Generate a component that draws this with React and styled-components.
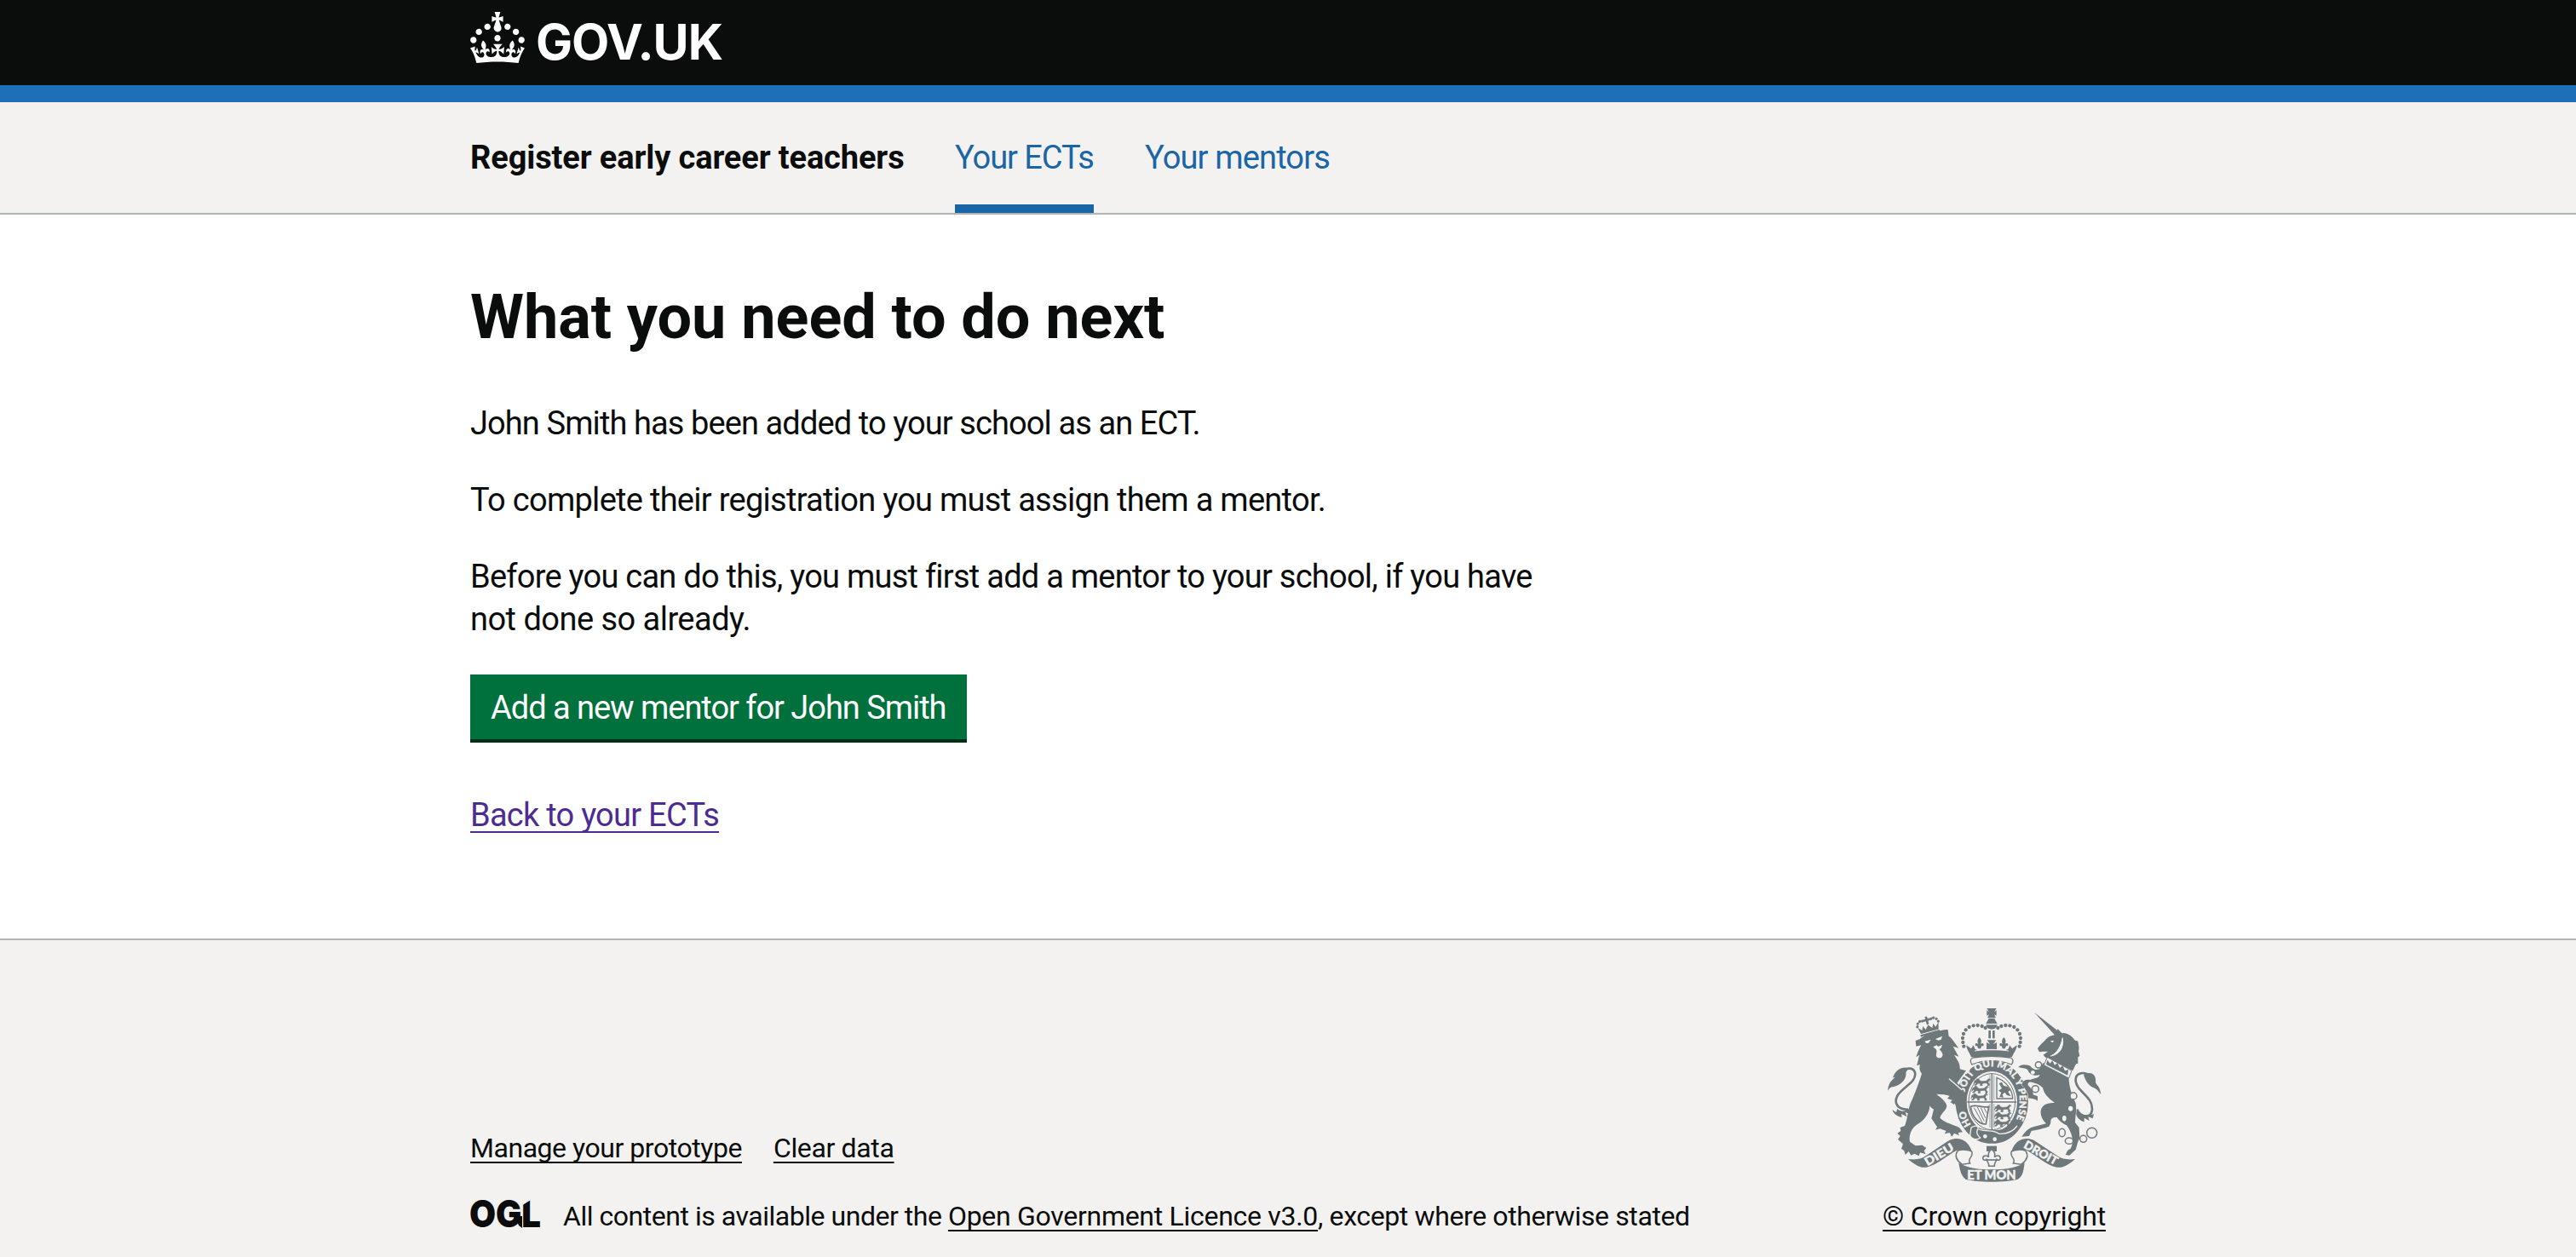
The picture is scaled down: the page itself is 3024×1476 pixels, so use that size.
import React from 'react';
import styled, { createGlobalStyle, css } from 'styled-components';

const INK = '#0b0c0c';
const PAPER = '#f3f2f1';
const BORDER = '#b1b4b6';
const LINK = '#1a65a6';
const CREST = '#6e787b';

const GlobalStyle = createGlobalStyle`
  *, *::before, *::after { box-sizing: border-box; }
  body {
    margin: 0;
    background: #fff;
    color: ${INK};
    font-family: Roboto, "Liberation Sans", sans-serif;
    font-size: 38px;
    line-height: 50px;
  }
`;

const Page = styled.div`
  height: 1476px;
  display: flex;
  flex-direction: column;
  overflow: hidden;
`;

const Container = styled.div`
  width: 1920px;
  margin: 0 auto;
`;

const Header = styled.header`
  background: ${INK};
  border-bottom: 20px solid #1d70b8;
  height: 120px;
`;

const HeaderInner = styled(Container)`
  padding-top: 14px;
  display: flex;
  align-items: flex-start;
`;

const HomeLogo = styled.svg`
  width: 300px;
  height: 80px;
  fill: #fff;
  display: block;
  overflow: visible;
`;

const ServiceBar = styled.div`
  background: ${PAPER};
  border-bottom: 2px solid ${BORDER};
`;

const ServiceInner = styled(Container)`
  height: 130px;
  display: flex;
  gap: 60px;
`;

const ServiceName = styled.span`
  width: 509px;
  line-height: 130px;
  font-weight: 700;
  white-space: nowrap;
  letter-spacing: -0.12px;
`;

const NavLink = styled.a`
  line-height: 130px;
  height: 130px;
  color: ${LINK};
  text-decoration: none;
  white-space: nowrap;
  letter-spacing: ${(p) => p.$track}px;
  ${(p) => p.$active && css`border-bottom: 10px solid ${LINK};`}
`;

const Main = styled(Container).attrs({ as: 'main' })`
  padding: 81px 0 120px;
`;

const Heading = styled.h1`
  margin: 0 0 59px;
  font-size: 72px;
  line-height: 80px;
  font-weight: 700;
  letter-spacing: -0.05px;
`;

const Column = styled.div`
  width: 1280px;
`;

const Paragraph = styled.p`
  margin: 0 0 40px;
  letter-spacing: ${(p) => p.$track}px;
`;

const Tracked = styled.span`
  letter-spacing: ${(p) => p.$track}px;
`;

const Button = styled.button`
  display: block;
  width: 583px;
  height: 76px;
  margin: 0 0 64px;
  padding: 2px 0 0 24px;
  border: 0;
  background: #00703c;
  box-shadow: 0 4px 0 #002d18;
  color: #fff;
  font: inherit;
  text-align: left;
  white-space: nowrap;
  letter-spacing: -1.03px;
`;

const Link = styled.a`
  color: ${(p) => (p.$visited ? '#4c2c92' : INK)};
  text-decoration: underline;
  text-decoration-thickness: 2px;
  text-underline-offset: ${(p) => (p.$visited ? 6 : 5)}px;
  text-decoration-skip-ink: none;
  letter-spacing: ${(p) => p.$track}px;
  white-space: nowrap;
`;

const BackRow = styled.p`
  margin: 0;
`;

const Footer = styled.footer`
  flex: 1;
  background: ${PAPER};
  border-top: 2px solid ${BORDER};
  padding-top: 80px;
  font-size: 32px;
  line-height: 40px;
`;

const FooterInner = styled(Container)`
  display: flex;
  justify-content: space-between;
  align-items: flex-end;
`;

const FooterMeta = styled.div`
  display: flex;
  flex-direction: column;
  gap: 40px;
`;

const FooterLinks = styled.div`
  display: flex;
  gap: 37px;
`;

const Licence = styled.div`
  display: flex;
  gap: 27px;
  white-space: nowrap;
`;

const OglMark = styled.svg`
  width: 82px;
  height: 34px;
  display: block;
  overflow: visible;
`;

const Copyright = styled.div`
  width: 262px;
  display: flex;
  flex-direction: column;
  align-items: center;
  gap: 20px;
`;

const CrestSvg = styled.svg`
  width: 250px;
  height: 204px;
  display: block;
`;

const GovLogo = () => (
  <HomeLogo viewBox="0 0 300 80" aria-label="GOV.UK">
    <path
      transform="scale(2)"
      d="M22.6 10.4c-1 .4-2-.1-2.4-1-.4-.9.1-2 1-2.4.9-.4 2 .1 2.4 1s-.1 2-1 2.4m-5.9 6.7c-.9.4-2-.1-2.4-1-.4-.9.1-2 1-2.4.9-.4 2 .1 2.4 1s-.1 2-1 2.4m10.8-3.7c-1 .4-2-.1-2.4-1-.4-.9.1-2 1-2.4.9-.4 2 .1 2.4 1s0 2-1 2.4m3.3 4.8c-1 .4-2-.1-2.4-1-.4-.9.1-2 1-2.4.9-.4 2 .1 2.4 1s-.1 2-1 2.4M17 4.7l2.3 1.2V2.5l-2.3.7-.2-.2.9-3h-3.4l.9 3-.2.2c-.1.1-2.3-.7-2.3-.7v3.4L15 4.7c.1.1.1.2.2.2l-1.3 4c-.1.2-.1.4-.1.6 0 1.1.8 2 1.9 2.2h.7c1-.2 1.9-1.1 1.9-2.1 0-.2 0-.4-.1-.6l-1.3-4c-.1-.2 0-.2.1-.3m-7.6 5.7c.9.4 2-.1 2.4-1 .4-.9-.1-2-1-2.4-.9-.4-2 .1-2.4 1s0 2 1 2.4m-5 3c.9.4 2-.1 2.4-1 .4-.9-.1-2-1-2.4-.9-.4-2 .1-2.4 1s.1 2 1 2.4m-3.2 4.8c.9.4 2-.1 2.4-1 .4-.9-.1-2-1-2.4-.9-.4-2 .1-2.4 1s0 2 1 2.4m14.8 11c4.4 0 8.6.3 12.3.8 1.1-4.5 2.4-7 3.7-8.8l-2.5-.9c.2 1.3.3 1.9 0 2.7-.4-.4-.8-1.1-1.1-2.3l-1.2 4c.7-.5 1.3-.8 2-.9-1.1 2.5-2.6 3.1-3.5 3-1.1-.2-1.7-1.2-1.5-2.1.3-1.2 1.5-1.5 2.1-.1 1.1-2.3-.8-3-2-2.3 1.9-1.9 2.1-3.5.6-5.6-2.1 1.6-2.1 3.2-1.2 5.5-1.2-1.4-3.2-.6-2.5 1.6.9-1.4 2.1-.5 1.9.8-.2 1.1-1.7 2.1-3.5 1.9-2.7-.2-2.9-2.1-2.9-3.6.7-.1 1.9.5 2.9 1.9l.4-4.3c-1.1 1.1-2.1 1.4-3.2 1.4.4-1.2 2.1-3 2.1-3h-5.4s1.7 1.9 2.1 3c-1.1 0-2.1-.2-3.2-1.4l.4 4.3c1-1.4 2.2-2 2.9-1.9-.1 1.5-.2 3.4-2.9 3.6-1.9.2-3.4-.8-3.5-1.9-.2-1.3 1-2.2 1.9-.8.7-2.3-1.2-3-2.5-1.6.9-2.2.9-3.9-1.2-5.5-1.5 2-1.3 3.7.6 5.6-1.2-.7-3.1 0-2 2.3.6-1.4 1.8-1.1 2.1.1.2.9-.3 1.9-1.5 2.1-.9.2-2.4-.5-3.5-3 .6 0 1.2.3 2 .9l-1.2-4c-.3 1.1-.7 1.9-1.1 2.3-.3-.8-.2-1.4 0-2.7l-2.9.9C1.3 23 2.6 25.5 3.7 30c3.7-.5 7.9-.8 12.3-.8"
    />
    <text x="77" y="56" fontFamily="Inter, sans-serif" fontWeight="700" fontSize="57.5" textLength="220" lengthAdjust="spacing">
      GOV.UK
    </text>
  </HomeLogo>
);

const OglLogo = () => (
  <OglMark viewBox="0 0 82 34" aria-label="OGL">
    <text x="-1" y="33" fill={INK} fontFamily="Inter, sans-serif" fontWeight="900" fontSize="44" textLength="84" lengthAdjust="spacingAndGlyphs">
      OGL
    </text>
    <path d="M52 20H61V34L57 31z" fill={INK} />
    <path d="M61.5 0H71V1L61.5 7z" fill={PAPER} />
  </OglMark>
);

/* One side of the beaded arch on the royal crown. */
const BEADS = [
  [346, 176], [343, 162], [342, 147], [345, 132], [353, 118], [365, 108], [380, 103], [395, 102], [410, 105], [422, 111],
];

/* Beads over the small crown worn by the lion. */
const LION_BEADS = [[184, 97], [188, 87], [197, 81], [206, 82], [238, 82], [247, 81], [256, 87], [260, 97]];

/* Passant lions, three rows in the first quarter and three in the fourth. */
const PASSANT_AT = [[381, 290], [374, 316], [371, 342], [454, 382], [454, 408], [452, 434]];
const PASSANT = 'M0 16L3 6L8 4L10 0L16 1L20 6L26 8L38 7C44 7 44 0 50 0L54 4L48 4C50 8 46 10 46 12L50 16L50 21L44 21L45 17L40 13L30 14L26 17L28 21L20 21L22 15L14 14L8 20L2 20L8 14L6 11L3 12z';

const FLEUR = 'M0-20C8-12 8-4 4 4C9-1 15 0 15 6C15 11 10 12 8 9C8 13 5 15 5 20H-5C-5 15-8 13-8 9C-10 12-15 11-15 6C-15 0-9-1-4 4C-8-4-8-12 0-20z';

const RoyalArms = () => (
  <CrestSvg viewBox="78 42 750 612" fill={CREST} aria-hidden="true">
    <defs>
      <path id="garter-name" d="M372 452A97 116 0 0 1 349 380" />
      <path id="garter-motto" d="M348 342A98 116 0 0 1 542 373A98 116 0 0 1 494 478" />
    </defs>

    {/* lion tail */}
    <path d="M150 398C115 400 98 378 112 350C128 320 182 302 174 268C168 248 142 250 126 268" fill="none" stroke={CREST} strokeWidth="8" />
    <path d="M152 252C130 245 105 258 96 286L104 284C92 296 80 305 78 332C84 322 92 318 100 318C125 312 146 290 142 268z" />
    <path d="M94 400L108 408L112 396C125 408 140 405 150 396L160 402L150 412L140 408L146 424L126 414L128 426C114 424 100 416 94 400z" />

    {/* lion */}
    <path d="M176 156L192 150C205 135 255 118 290 117L293 140C302 144 308 156 328 182L308 176L328 212L312 206C322 222 334 236 332 256L354 262L320 308L350 340C356 360 354 382 348 398L338 386L342 402L328 392L322 402L316 384L298 372L308 366L288 360L296 350L276 346L250 344C262 356 278 362 286 384C286 402 266 410 262 428C280 446 310 452 330 462L342 478L326 480L330 490L312 482L304 494L296 480L278 484L284 474L262 466L246 470L252 460L232 430L240 398C228 390 226 386 226 384C226 412 206 438 180 452C160 466 152 490 156 512L176 526L200 524L214 534L206 544L212 556L192 550L188 562L172 554L160 560L152 546L140 558L136 544L126 536L132 520L114 504L122 492L112 482L124 474L122 462L138 456C150 430 148 392 164 364C176 336 186 310 198 272C190 262 188 250 192 240L180 244C186 228 186 214 190 206L178 214C182 200 188 186 196 172L178 176z" />
    <g fill={PAPER}>
      <path d="M208 158L230 152L222 164L214 165z" />
      <path d="M246 150L270 140L266 152L256 155z" />
      <path d="M238 178L250 172L256 177L270 170L266 182L260 186L268 196L272 206C270 218 256 220 250 212C246 204 254 196 248 186z" />
    </g>

    {/* lion's crown */}
    <g transform="rotate(-15 222 108)">
      <path d="M190 124L184 100L197 114L203 100L210 114L222 100L234 114L241 100L246 114L260 100L254 124z" />
      <path d="M187 127H257V134H187z" />
      <path d="M218 70H226V78H234V86H226V98H218V86H210V78H218z" />
      {LION_BEADS.map(([x, y]) => (
        <circle key={x} cx={x} cy={y} r="4.8" />
      ))}
    </g>

    {/* unicorn tail */}
    <path d="M744 398C760 430 796 430 798 398C800 350 742 336 740 296C738 268 772 262 790 282" fill="none" stroke={CREST} strokeWidth="8" />
    <path d="M768 276C792 262 814 274 810 302C814 314 828 318 828 346C820 332 812 324 800 320C782 312 774 294 768 276z" />
    <path d="M742 396C752 420 780 424 804 414L800 430L784 424L788 438L770 428L770 442C756 438 744 428 740 410z" />

    {/* royal crown */}
    <path d="M427 42H461L453 55L461 49V68L453 64L459 76H429L435 64L427 68V49L435 55z" />
    <path d="M434 78H454L464 96H424z" />
    <path d="M424 100H464C462 112 452 116 444 116S426 112 424 100z" />
    {BEADS.map(([x, y]) => (
      <React.Fragment key={`${x}-${y}`}>
        <circle cx={x} cy={y} r="6.4" />
        <circle cx={888 - x} cy={y} r="6.4" />
      </React.Fragment>
    ))}
    <path d="M433 120H441V148H433zM447 120H455V148H447z" />
    <path d="M355 172L372 184L380 172L386 186L396 190H492L502 186L508 172L516 184L533 172C532 190 520 200 516 214H372C368 200 356 190 355 172z" />
    <path d="M428 154H460L450 168L462 162V186H426V162L438 168z" />
    <path transform="translate(401 164)" d={FLEUR} />
    <path transform="translate(487 164)" d={FLEUR} />
    <path d="M384 192Q444 182 504 192" fill="none" stroke={PAPER} strokeWidth="3" />

    {/* garter and shield */}
    <ellipse cx="445" cy="373" rx="130" ry="148" stroke={PAPER} strokeWidth="5" />
    <path d="M378 216Q444 206 510 216Q526 222 514 240Q444 214 374 240Q364 222 378 216z" fill={PAPER} stroke={CREST} strokeWidth="4" />
    <ellipse cx="445" cy="371" rx="89" ry="107" fill={PAPER} />
    <ellipse cx="445" cy="371" rx="82" ry="99" fill="none" stroke={CREST} strokeWidth="3" />
    <path d="M443 270H447V472H443zM358 370H532V374H358z" />
    <path d="M438 278V366M452 278V366M438 378V462M452 378V462" fill="none" stroke={CREST} strokeWidth="2" />
    {PASSANT_AT.map(([x, y]) => (
      <path key={`${x}-${y}`} d={PASSANT} transform={`translate(${x} ${y}) scale(1.1 1.15)`} stroke={CREST} strokeWidth="1.5" />
    ))}
    <path d="M462 286V360H518C518 330 494 298 462 286z" fill="none" stroke={CREST} strokeWidth="4" />
    <path d="M470 306L480 302L486 314L500 318L510 330L502 336L512 352L498 348L490 338L482 346L486 356L472 354L478 338L468 332L480 324z" />
    <path d="M370 388C396 378 408 396 434 388L424 450C400 452 374 424 370 388z" fill="none" stroke={CREST} strokeWidth="5" />
    <path d="M382 392L412 446M394 390L418 440M406 392L422 428M418 394L428 412" stroke={CREST} strokeWidth="3" />
    <path d="M362 470L372 462C392 450 402 460 394 470C420 484 500 494 540 446L530 440C500 480 420 476 392 460z" />
    <path d="M398 468C430 480 446 466 470 484C500 486 520 474 534 456" fill="none" stroke={PAPER} strokeWidth="4" />
    <path d="M372 462C392 450 402 460 394 470C388 480 396 492 404 498C392 508 370 502 368 488z" stroke={PAPER} strokeWidth="4" />
    <circle cx="421" cy="493" r="7" fill={PAPER} />
    <circle cx="455" cy="503" r="7" fill={PAPER} />
    <g fill={PAPER} stroke={PAPER} strokeWidth="1" fontFamily="Lato, sans-serif" fontWeight="900" fontSize="34">
      <text><textPath href="#garter-name">HO</textPath></text>
      <text letterSpacing="0.9"><textPath href="#garter-motto">SOIT QUI MAL Y PENSE</textPath></text>
    </g>

    {/* lion's forepaw resting on the garter */}
    <path d="M296 284L322 304L346 334C358 352 356 376 352 398L342 388L340 402L328 390L320 396L316 380L302 368L312 360L296 346z" />
    <path d="M294 290L340 330" stroke={PAPER} strokeWidth="4" />

    {/* unicorn */}
    <path d="M594 56L668 138L686 128z" />
    <path d="M676 114L692 130C708 126 730 142 736 154L748 158C750 172 754 182 750 192L754 210L748 214L748 238C742 234 740 238 730 262L632 214L626 206L642 194L624 194L612 196L606 184C612 172 632 156 640 146C650 138 662 136 674 134z" />
    <path d="M694 146C698 176 688 204 652 210C676 200 688 174 694 146z" fill={PAPER} stroke={PAPER} strokeWidth="3" />
    <path d="M650 156L664 156L658 163z" fill={PAPER} />
    <path
      d="M626 234L716 288C716 318 728 350 740 376C744 400 738 424 738 444L752 462L754 500C746 512 744 530 740 540L718 560L704 558L712 542L722 536C738 506 722 474 708 454C694 448 680 436 674 426C660 424 650 430 652 446L646 458C620 468 600 470 584 474L576 492L550 494C560 480 572 462 596 458L636 448C610 424 606 380 652 376L666 374C640 358 628 340 624 322C612 310 600 306 590 304C580 298 570 302 572 312C580 322 592 332 590 346L606 352L606 368C596 360 584 360 572 358C576 344 564 326 552 314C548 300 562 290 580 294C600 284 606 292 614 276C596 282 578 276 572 260C562 250 548 254 538 250C546 238 562 240 578 244C590 256 596 262 612 256z"
      stroke={PAPER}
      strokeWidth="3"
      paintOrder="stroke"
    />
    <path d="M640 214L726 262L716 288L628 242z" fill={PAPER} stroke={CREST} strokeWidth="3" />
    <path d="M636 240L640 224L650 236L658 226L666 242L676 234L684 252L694 244L702 262L714 258L712 278z" />
    <g fill={PAPER} stroke={CREST} strokeWidth="4.5">
      <circle cx="609" cy="241" r="11" />
      <circle cx="598" cy="326" r="12" />
      <circle cx="732" cy="351" r="12" />
      <ellipse cx="692" cy="480" rx="11" ry="14" />
      <ellipse cx="717" cy="509" rx="14" ry="11" />
      <circle cx="767" cy="502" r="12" />
      <circle cx="797" cy="481" r="18" />
    </g>
    <g fill={PAPER}>
      <circle cx="589" cy="268" r="7" />
      <ellipse cx="722" cy="395" rx="8" ry="9" />
      <ellipse cx="700" cy="430" rx="7" ry="10" />
    </g>

    {/* motto ribbon */}
    <path d="M150 573C176 576 194 574 212 562L296 506C330 492 362 506 374 546L322 542C292 556 250 596 214 602C190 606 170 590 150 573z" />
    <path d="M738 573C712 576 694 574 676 562L592 506C558 492 526 506 514 546L566 542C596 556 638 596 674 602C698 606 718 590 738 573z" />
    <path d="M324 544C310 566 326 582 340 592L368 588C356 570 382 566 374 546C362 540 340 538 324 544z" fill={PAPER} stroke={CREST} strokeWidth="4.5" />
    <path d="M564 544C578 566 562 582 548 592L520 588C532 570 506 566 514 546C526 540 548 538 564 544z" fill={PAPER} stroke={CREST} strokeWidth="4.5" />
    <path d="M328 586C360 608 410 610 444 610S528 608 560 586C556 620 552 636 536 644C500 656 388 656 352 644C336 632 332 612 328 586z" />
    <g fill={PAPER} stroke={PAPER} strokeWidth="1.2" fontFamily="Lato, sans-serif" fontWeight="900">
      <text fontSize="41" textLength="112" lengthAdjust="spacingAndGlyphs" transform="translate(218 598) rotate(-31)">DIEU</text>
      <text fontSize="44" textLength="172" lengthAdjust="spacingAndGlyphs" transform="translate(358 645)">ET MON</text>
      <text fontSize="41" textLength="130" lengthAdjust="spacingAndGlyphs" transform="translate(554 532) rotate(29)">DROIT</text>
    </g>
    <path d="M426 527H462V546H426z" />
    <path d="M444 538C456 548 458 556 454 566C464 556 478 562 474 574C468 580 464 576 462 574C460 584 452 586 454 598H434C436 586 428 584 426 574C424 576 420 580 414 574C410 562 424 556 434 566C430 556 432 548 444 538z" fill={PAPER} stroke={CREST} strokeWidth="4.5" />
    <path d="M424 576H464" stroke={CREST} strokeWidth="5" />
  </CrestSvg>
);

export default function App() {
  return (
    <>
      <GlobalStyle />
      <Page>
        <Header>
          <HeaderInner>
            <GovLogo />
          </HeaderInner>
        </Header>

        <ServiceBar>
          <ServiceInner>
            <ServiceName>Register early career teachers</ServiceName>
            <NavLink href="#" $active $track={-1.06}>Your ECTs</NavLink>
            <NavLink href="#" $track={-0.85}>Your mentors</NavLink>
          </ServiceInner>
        </ServiceBar>

        <Main>
          <Heading>What you need to do next</Heading>
          <Column>
            <Paragraph $track={-0.9}>John Smith has been added to your school as an ECT.</Paragraph>
            <Paragraph $track={-0.72}>To complete their registration you must assign them a mentor.</Paragraph>
            <Paragraph $track={-0.75}>
              Before you can do this, you must first add a mentor to your school, if you have{' '}
              <Tracked $track={-0.53}>not done so already.</Tracked>
            </Paragraph>
            <Button type="button">Add a new mentor for John Smith</Button>
            <BackRow>
              <Link href="#" $visited $track={-0.74}>Back to your ECTs</Link>
            </BackRow>
          </Column>
        </Main>

        <Footer>
          <FooterInner>
            <FooterMeta>
              <FooterLinks>
                <Link href="#" $track={-0.46}>Manage your prototype</Link>
                <Link href="#" $track={-0.35}>Clear data</Link>
              </FooterLinks>
              <Licence>
                <OglLogo />
                <span>
                  <Tracked $track={-0.47}>All content is available under the </Tracked>
                  <Link href="#" $track={-0.29}>Open Government Licence v3.0</Link>
                  <Tracked $track={-0.38}>, except where otherwise stated</Tracked>
                </span>
              </Licence>
            </FooterMeta>
            <Copyright>
              <RoyalArms />
              <Link href="#" $track={-0.18}>© Crown copyright</Link>
            </Copyright>
          </FooterInner>
        </Footer>
      </Page>
    </>
  );
}
